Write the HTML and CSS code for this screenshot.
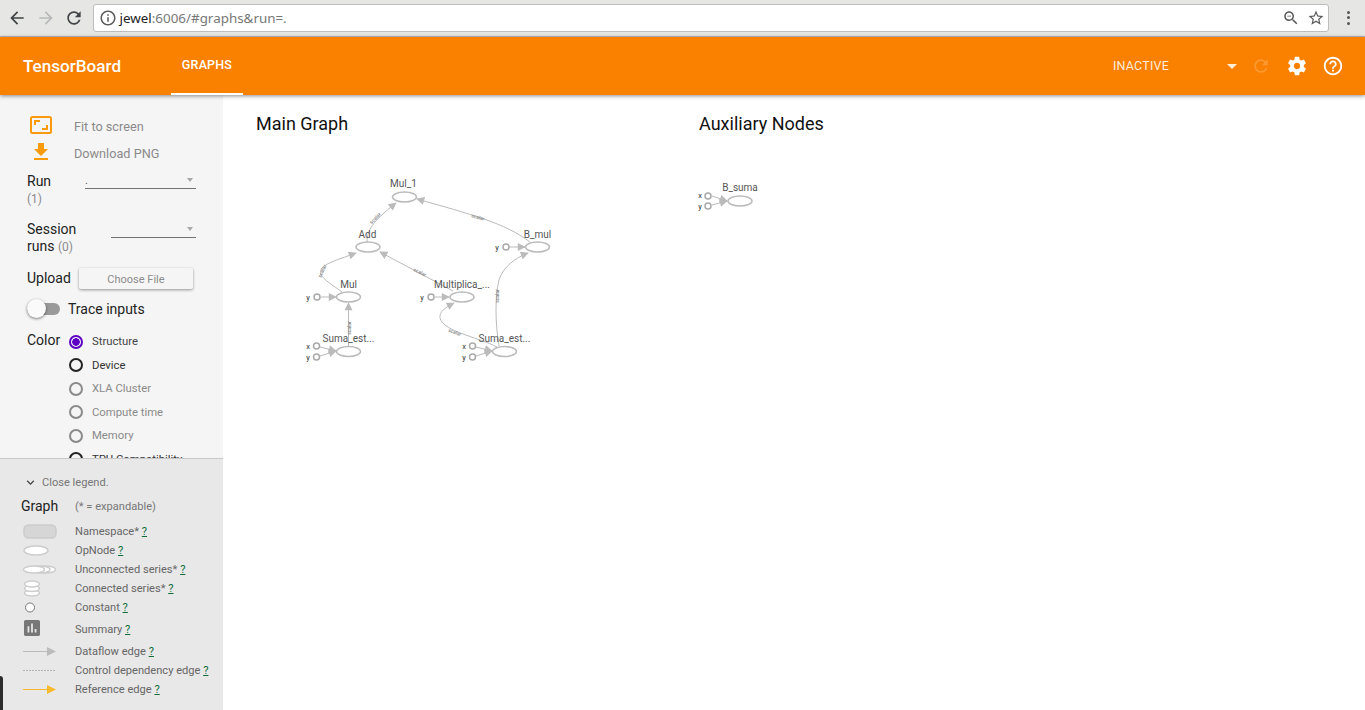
FILE: index.html
```html
<!DOCTYPE html>
<html lang="en">
<head>
  <meta charset="UTF-8">
  <title>TensorBoard</title>
  <link rel="stylesheet" href="styles.css">
</head>
<body>

  <!-- Browser toolbar -->
  <div class="browser-bar">
    <svg class="nav-icon" viewBox="0 0 24 24"><path d="M20 11H7.83l5.59-5.59L12 4l-8 8 8 8 1.41-1.41L7.83 13H20v-2z"/></svg>
    <svg class="nav-icon nav-off" viewBox="0 0 24 24"><path d="M4 11h12.17l-5.59-5.59L12 4l8 8-8 8-1.41-1.41L16.17 13H4v-2z"/></svg>
    <svg class="nav-icon" viewBox="0 0 24 24"><path d="M17.65 6.35C16.2 4.9 14.21 4 12 4c-4.42 0-7.99 3.58-7.99 8s3.57 8 7.99 8c3.73 0 6.84-2.55 7.73-6h-2.08c-.82 2.33-3.04 4-5.65 4-3.31 0-6-2.69-6-6s2.69-6 6-6c1.66 0 3.14.69 4.22 1.78L13 11h7V4l-2.35 2.35z"/></svg>
    <div class="url-box">
      <svg class="url-icon" viewBox="0 0 24 24"><path d="M11 7h2v2h-2zm0 4h2v6h-2zm1-9C6.48 2 2 6.48 2 12s4.48 10 10 10 10-4.48 10-10S17.52 2 12 2zm0 18c-4.41 0-8-3.59-8-8s3.59-8 8-8 8 3.59 8 8-3.59 8-8 8z"/></svg>
      <div class="url-text"><span class="url-host">jewel</span>:6006/#graphs&amp;run=.</div>
      <svg class="url-icon" viewBox="0 0 24 24"><path d="M15.5 14h-.79l-.28-.27C15.41 12.59 16 11.11 16 9.5 16 5.91 13.09 3 9.5 3S3 5.91 3 9.5 5.91 16 9.5 16c1.61 0 3.09-.59 4.23-1.57l.27.28v.79l5 4.99L20.49 19l-4.99-5zm-6 0C7.01 14 5 11.99 5 9.5S7.01 5 9.5 5 14 7.01 14 9.5 11.99 14 9.5 14zM7 9h5v1H7z"/></svg>
      <svg class="url-icon" viewBox="0 0 24 24"><path d="M22 9.24l-7.19-.62L12 2 9.19 8.63 2 9.24l5.46 4.73L5.82 21 12 17.27 18.18 21l-1.63-7.03L22 9.24zM12 15.4l-3.76 2.27 1-4.28-3.32-2.88 4.38-.38L12 6.1l1.71 4.04 4.38.38-3.32 2.88 1 4.28L12 15.4z"/></svg>
    </div>
    <div class="menu-dots"><span></span><span></span><span></span></div>
  </div>

  <!-- Orange header -->
  <div class="top-bar">
    <div class="brand">TensorBoard</div>
    <div class="tab">GRAPHS</div>
    <div class="top-spacer"></div>
    <div class="run-state">INACTIVE</div>
    <div class="state-caret"></div>
    <svg class="top-icon top-icon-off" viewBox="0 0 24 24"><path d="M17.65 6.35C16.2 4.9 14.21 4 12 4c-4.42 0-7.99 3.58-7.99 8s3.57 8 7.99 8c3.73 0 6.84-2.55 7.73-6h-2.08c-.82 2.33-3.04 4-5.65 4-3.31 0-6-2.69-6-6s2.69-6 6-6c1.66 0 3.14.69 4.22 1.78L13 11h7V4l-2.35 2.35z"/></svg>
    <svg class="top-icon" viewBox="0 0 24 24"><path d="M19.43 12.98c.04-.32.07-.64.07-.98s-.03-.66-.07-.98l2.11-1.65c.19-.15.24-.42.12-.64l-2-3.46c-.12-.22-.39-.3-.61-.22l-2.49 1c-.52-.4-1.08-.73-1.69-.98l-.38-2.65C14.46 2.18 14.25 2 14 2h-4c-.25 0-.46.18-.49.42l-.38 2.65c-.61.25-1.17.59-1.69.98l-2.49-1c-.23-.09-.49 0-.61.22l-2 3.46c-.13.22-.07.49.12.64l2.11 1.65c-.04.32-.07.65-.07.98s.03.66.07.98l-2.11 1.65c-.19.15-.24.42-.12.64l2 3.46c.12.22.39.3.61.22l2.49-1c.52.4 1.08.73 1.69.98l.38 2.65c.03.24.24.42.49.42h4c.25 0 .46-.18.49-.42l.38-2.65c.61-.25 1.17-.59 1.69-.98l2.49 1c.23.09.49 0 .61-.22l2-3.46c.12-.22.07-.49-.12-.64l-2.11-1.65zM12 15.5c-1.93 0-3.5-1.57-3.5-3.5s1.57-3.5 3.5-3.5 3.5 1.57 3.5 3.5-1.57 3.5-3.5 3.5z"/></svg>
    <svg class="top-icon" viewBox="0 0 24 24"><path d="M11 18h2v-2h-2v2zm1-16C6.48 2 2 6.48 2 12s4.48 10 10 10 10-4.48 10-10S17.52 2 12 2zm0 18c-4.41 0-8-3.59-8-8s3.59-8 8-8 8 3.59 8 8-3.59 8-8 8zm0-14c-2.21 0-4 1.79-4 4h2c0-1.1.9-2 2-2s2 .9 2 2c0 2-3 1.75-3 5h2c0-2.25 3-2.5 3-5 0-2.21-1.79-4-4-4z"/></svg>
  </div>

  <div class="page">

    <!-- Left side: controls and legend -->
    <div class="sidebar">
      <div class="controls">
        <div class="action-row">
          <svg class="action-icon" viewBox="0 0 22 18"><rect x="1" y="1" width="20" height="16" rx="1.5" class="fit-frame"/><path d="M5 9V5h5M17 9v4h-5" class="fit-corner"/></svg>
          <div>Fit to screen</div>
        </div>
        <div class="action-row">
          <svg class="action-icon action-icon-download" viewBox="0 0 24 24"><path d="M19 9h-4V3H9v6H5l7 7 7-7zM5 18v2h14v-2H5z"/></svg>
          <div>Download PNG</div>
        </div>

        <div class="field-row field-run">
          <div class="field-label">Run<div class="field-count">(1)</div></div>
          <div class="select-line select-run"><span class="select-value">.</span><span class="select-caret"></span></div>
        </div>
        <div class="field-row field-session">
          <div class="field-label field-label-wide">Session<br>runs <span class="field-count-inline">(0)</span></div>
          <div class="select-line select-session"><span class="select-value"></span><span class="select-caret"></span></div>
        </div>

        <div class="upload-row">
          <div class="upload-label">Upload</div>
          <div class="upload-btn">Choose File</div>
        </div>

        <div class="toggle-row">
          <div class="toggle"><div class="toggle-thumb"></div></div>
          <div>Trace inputs</div>
        </div>

        <div class="color-row">
          <div class="color-label">Color</div>
          <div class="radio-list">
            <div class="radio-item radio-on"><span class="radio"></span>Structure</div>
            <div class="radio-item radio-dark"><span class="radio"></span>Device</div>
            <div class="radio-item"><span class="radio"></span>XLA Cluster</div>
            <div class="radio-item"><span class="radio"></span>Compute time</div>
            <div class="radio-item"><span class="radio"></span>Memory</div>
            <div class="radio-item radio-dark"><span class="radio"></span>TPU Compatibility</div>
          </div>
        </div>
      </div>

      <div class="legend">
        <div class="legend-toggle">
          <svg viewBox="0 0 24 24"><path d="M16.59 8.59L12 13.17 7.41 8.59 6 10l6 6 6-6z"/></svg>
          <span>Close legend.</span>
        </div>
        <div class="legend-head"><div class="legend-title">Graph</div><div>(* = expandable)</div></div>

        <div class="legend-row">
          <svg class="legend-icon" viewBox="0 0 34 19"><rect x="1" y="3" width="32" height="13" rx="4.5" class="legend-ns"/></svg>
          <div>Namespace* <a class="help">?</a></div>
        </div>
        <div class="legend-row">
          <svg class="legend-icon" viewBox="0 0 34 19"><ellipse cx="13" cy="9.5" rx="12" ry="4.5" class="legend-op"/></svg>
          <div>OpNode <a class="help">?</a></div>
        </div>
        <div class="legend-row">
          <svg class="legend-icon" viewBox="0 0 34 19">
            <ellipse cx="22.500" cy="9.5" rx="10" ry="3.500" class="legend-op"/>
            <ellipse cx="17" cy="9.5" rx="10" ry="3.500" class="legend-op"/>
            <ellipse cx="11" cy="9.5" rx="10.500" ry="3.500" class="legend-op"/>
          </svg>
          <div>Unconnected series* <a class="help">?</a></div>
        </div>
        <div class="legend-row">
          <svg class="legend-icon" viewBox="0 0 34 19">
            <ellipse cx="9" cy="14" rx="7.500" ry="3" class="legend-op"/>
            <ellipse cx="9" cy="9.5" rx="7.500" ry="3" class="legend-op"/>
            <ellipse cx="9" cy="5" rx="7.500" ry="3" class="legend-op"/>
          </svg>
          <div>Connected series* <a class="help">?</a></div>
        </div>
        <div class="legend-row">
          <svg class="legend-icon" viewBox="0 0 34 19"><circle cx="7" cy="9.500" r="4.500" fill="#fff" stroke="#777"/></svg>
          <div>Constant <a class="help">?</a></div>
        </div>
        <div class="legend-row legend-row-tall">
          <svg class="legend-icon-summary" viewBox="3 3 18 18"><path d="M19 3H5c-1.100 0-2 .9-2 2v14c0 1.100.9 2 2 2h14c1.100 0 2-.9 2-2V5c0-1.100-.9-2-2-2zM9 17H7v-7h2v7zm4 0h-2V7h2v10zm4 0h-2v-4h2v4z"/></svg>
          <div>Summary <a class="help">?</a></div>
        </div>
        <div class="legend-row">
          <svg class="legend-icon" viewBox="0 0 34 19"><path d="M0 9.500H25" stroke="#bbb" stroke-width="1"/><path d="M24 5l9 4.500-9 4.500z" fill="#bbb"/></svg>
          <div>Dataflow edge <a class="help">?</a></div>
        </div>
        <div class="legend-row">
          <svg class="legend-icon" viewBox="0 0 34 19"><path d="M0 9.500H33" stroke="#b4b4b4" stroke-width="1" stroke-dasharray="2 1"/></svg>
          <div>Control dependency edge <a class="help">?</a></div>
        </div>
        <div class="legend-row">
          <svg class="legend-icon" viewBox="0 0 34 19"><path d="M0 9.500H25" stroke="#fbb92e" stroke-width="1"/><path d="M24 5l9 4.500-9 4.500z" fill="#fbb92e"/></svg>
          <div>Reference edge <a class="help">?</a></div>
        </div>
      </div>
      <div class="dock-corner"></div>
    </div>

    <!-- Graph canvas, drawn in page coordinates -->
    <div class="board">
      <svg class="graph" viewBox="223 95 1142 615">
        <defs>
          <marker id="arrow" viewBox="0 0 10 10" refX="9" refY="5" markerWidth="9" markerHeight="8" markerUnits="userSpaceOnUse" orient="auto"><path d="M0 0L10 5L0 10z" fill="#bbb"/></marker>
        </defs>

        <g class="edges">
          <path marker-end="url(#arrow)" d="M367 242C367 228 376 219 396 203"/>
          <path marker-end="url(#arrow)" d="M342 292C330 283 316 276 322 268C328 262 340 259 356 253"/>
          <path marker-end="url(#arrow)" d="M453 291L380 252"/>
          <path marker-end="url(#arrow)" d="M530 242C505 223 470 214 417 199"/>
          <path marker-end="url(#arrow)" d="M499 346C495 322 495 296 499 280C503 267 515 258 528 253"/>
          <path marker-end="url(#arrow)" d="M497 347C477 337 451 333 442 322C436 314 444 308 454 303"/>
          <path marker-end="url(#arrow)" d="M348.500 346V303"/>
          <path marker-end="url(#arrow)" d="M321 297H336"/>
          <path marker-end="url(#arrow)" d="M320 347L336 351"/>
          <path marker-end="url(#arrow)" d="M320 356L336 351"/>
          <path marker-end="url(#arrow)" d="M435 297H449"/>
          <path marker-end="url(#arrow)" d="M476 347L492 351"/>
          <path marker-end="url(#arrow)" d="M476 356L492 351"/>
          <path marker-end="url(#arrow)" d="M509 247H525"/>
          <path marker-end="url(#arrow)" d="M712 196L727 201"/>
          <path marker-end="url(#arrow)" d="M712 205L727 201"/>
        </g>

        <g class="edge-labels">
          <text transform="translate(375 218) rotate(-45)">scalar</text>
          <text transform="translate(322 271) rotate(-65)">scalar</text>
          <text transform="translate(420 272) rotate(27)">scalar</text>
          <text transform="translate(478 217) rotate(16)">scalar</text>
          <text transform="translate(348.500 328) rotate(-90)">scalar</text>
          <text transform="translate(497 296) rotate(-90)">scalar</text>
          <text transform="translate(455 332) rotate(20)">scalar</text>
        </g>

        <g class="nodes">
          <ellipse cx="404.500" cy="197" rx="12" ry="5"/>
          <ellipse cx="368" cy="247" rx="12" ry="5"/>
          <ellipse cx="348.500" cy="297" rx="12" ry="5"/>
          <ellipse cx="348.500" cy="351.500" rx="12" ry="5"/>
          <ellipse cx="462" cy="297" rx="12" ry="5"/>
          <ellipse cx="504.500" cy="351.500" rx="12" ry="5"/>
          <ellipse cx="537.500" cy="247" rx="12" ry="5"/>
          <ellipse cx="740" cy="201" rx="12" ry="5"/>
          <circle cx="317" cy="297" r="3"/>
          <circle cx="316.500" cy="346" r="3"/>
          <circle cx="316.500" cy="357" r="3"/>
          <circle cx="431" cy="297" r="3"/>
          <circle cx="472.500" cy="346" r="3"/>
          <circle cx="472.500" cy="357" r="3"/>
          <circle cx="506" cy="247" r="3"/>
          <circle cx="708" cy="196" r="3"/>
          <circle cx="708" cy="206" r="3"/>
        </g>

        <g class="node-labels">
          <text x="403.500" y="187">Mul_1</text>
          <text x="367.500" y="238">Add</text>
          <text x="348.500" y="288">Mul</text>
          <text x="348.500" y="342">Suma_est...</text>
          <text x="462" y="288">Multiplica_...</text>
          <text x="504.500" y="342">Suma_est...</text>
          <text x="537.500" y="238">B_mul</text>
          <text x="740" y="191">B_suma</text>
        </g>

        <g class="port-labels">
          <text x="308" y="300">y</text>
          <text x="308" y="349">x</text>
          <text x="308" y="360">y</text>
          <text x="422" y="300">y</text>
          <text x="464" y="349">x</text>
          <text x="464" y="360">y</text>
          <text x="497" y="250">y</text>
          <text x="700" y="198">x</text>
          <text x="700" y="209">y</text>
        </g>
      </svg>
      <div class="board-titles">
        <div class="board-title board-title-main">Main Graph</div>
        <div class="board-title">Auxiliary Nodes</div>
      </div>
    </div>
  </div>

</body>
</html>
```

FILE: styles.css
```css
* {
  box-sizing: border-box;
}

html, body {
  height: 100%;
}

body {
  margin: 0;
  font-family: Roboto, "Liberation Sans", sans-serif;
  background-color: white;
  overflow: hidden;
  display: flex;
  flex-direction: column;
}

/* Browser toolbar */
.browser-bar {
  height: 37px;
  flex: none;
  background-color: #e6e6e5;
  border-bottom: 1px solid #b8b8b8;
  display: flex;
  align-items: center;
  padding: 0 0 1px 7px;
}

.nav-icon {
  width: 20px;
  height: 20px;
  margin-right: 8.500px;
  fill: #404345;
}

.nav-off {
  fill: #b8b9ba;
}

.url-box {
  width: 1236.500px;
  height: 28px;
  background-color: white;
  border: 1px solid #bdbdbd;
  border-radius: 3px;
  display: flex;
  align-items: center;
  padding: 0 3.500px 0 5px;
  gap: 3px;
}

.url-icon {
  width: 18px;
  height: 18px;
  fill: #5a5a5a;
}

.url-box .url-icon:last-child {
  margin-left: 4px;
}

.url-text {
  flex: 1;
  font-family: "Noto Sans", sans-serif;
  font-size: 13.400px;
  color: #777;
}

.url-host {
  color: #222;
}

.menu-dots {
  margin-left: 17.500px;
  display: flex;
  flex-direction: column;
  gap: 2.500px;
}

.menu-dots span {
  width: 3px;
  height: 3px;
  border-radius: 50%;
  background-color: #555;
}

/* Orange header */
.top-bar {
  height: 58px;
  flex: none;
  background-color: #fa8000;
  color: white;
  display: flex;
  align-items: center;
  padding-left: 23px;
  box-shadow: 0 1px 4px rgba(0, 0, 0, 0.45);
  position: relative;
  z-index: 2;
}

.brand {
  font-size: 17.100px;
  font-weight: 500;
  width: 148px;
}

.tab {
  width: 72px;
  height: 58px;
  line-height: 56px;
  text-align: center;
  font-size: 12.500px;
  font-weight: 500;
  letter-spacing: 0.2px;
  border-bottom: 2px solid white;
}

.top-spacer {
  flex: 1;
}

.run-state {
  font-size: 12.500px;
  letter-spacing: 0.2px;
  opacity: 0.85;
  width: 114px;
  padding-bottom: 2px;
}

.state-caret {
  width: 0;
  height: 0;
  border-left: 5px solid transparent;
  border-right: 5px solid transparent;
  border-top: 5px solid white;
  opacity: 0.85;
  margin-right: 14px;
}

.top-icon {
  width: 22px;
  height: 22px;
  fill: white;
  margin-right: 14px;
}

.top-icon:last-child {
  margin-right: 21px;
}

.top-icon-off {
  width: 20px;
  height: 20px;
  margin-right: 15px;
  opacity: 0.2;
}

.page {
  flex: 1;
  min-height: 0;
  display: flex;
}

/* Left side */
.sidebar {
  width: 223px;
  flex: none;
  background-color: #f5f5f5;
  display: flex;
  flex-direction: column;
  position: relative;
}

.controls {
  height: 363px;
  flex: none;
  overflow: hidden;
  padding: 18px 27px 0;
  font-size: 14px;
  color: #222;
}

.action-row {
  height: 27px;
  display: flex;
  align-items: center;
  font-size: 12.700px;
  color: #8a8a8a;
}

.action-icon {
  width: 22px;
  height: 22px;
  margin: 0 22px 3px 3px;
  fill: #fb9a0a;
}

.action-icon-download {
  width: 24px;
  height: 24px;
  margin: 0 21px 4px 2px;
}

.fit-frame {
  fill: none;
  stroke: #fb9a0a;
  stroke-width: 2;
}

.fit-corner {
  fill: none;
  stroke: #fb9a0a;
  stroke-width: 2;
}

.field-row {
  display: flex;
  justify-content: space-between;
  align-items: flex-start;
}

.field-run {
  margin-top: 5px;
  height: 37px;
}

.field-session {
  margin-top: 12px;
  height: 35px;
}

.field-label {
  line-height: 18px;
}

.field-label-wide {
  line-height: 17px;
}

.field-count {
  font-size: 12px;
  color: #8a8a8a;
}

.field-count-inline {
  font-size: 12px;
  color: #8a8a8a;
}

.select-line {
  height: 17px;
  border-bottom: 1px solid #737373;
  display: flex;
  justify-content: space-between;
  align-items: center;
  font-size: 11px;
  color: #555;
  padding-right: 3px;
}

.select-run {
  width: 111px;
}

.select-session {
  width: 85px;
}

.select-caret {
  width: 0;
  height: 0;
  border-left: 3.500px solid transparent;
  border-right: 3.500px solid transparent;
  border-top: 4px solid #a8a8a8;
}

.upload-row {
  margin-top: 11px;
  display: flex;
  align-items: center;
  height: 22px;
}

.upload-label {
  width: 52px;
}

.upload-btn {
  width: 114px;
  height: 21px;
  line-height: 23px;
  text-align: center;
  font-size: 11px;
  color: #8c8c8c;
  background-color: #f5f5f5;
  border-radius: 2px;
  box-shadow: 0 1px 3px rgba(0, 0, 0, 0.4);
}

.toggle-row {
  margin-top: 10px;
  height: 20px;
  display: flex;
  align-items: center;
  gap: 8px;
}

.toggle {
  width: 33px;
  height: 12px;
  background-color: #9a9a9a;
  border-radius: 6px;
  position: relative;
}

.toggle-thumb {
  position: absolute;
  left: 0;
  top: -4px;
  width: 19px;
  height: 19px;
  border-radius: 50%;
  background-color: #fafafa;
  box-shadow: 0 1px 3px rgba(0, 0, 0, 0.5);
}

.color-row {
  margin-top: 12px;
  display: flex;
}

.color-label {
  width: 42px;
  line-height: 18px;
}

.radio-list {
  display: flex;
  flex-direction: column;
  margin-top: -1px;
}

.radio-item {
  height: 23.500px;
  display: flex;
  align-items: center;
  gap: 9px;
  font-size: 11.300px;
  color: #8a8a8a;
  white-space: nowrap;
}

.radio {
  width: 14px;
  height: 14px;
  border-radius: 50%;
  border: 2px solid #8a8a8a;
  flex: none;
}

.radio-dark {
  color: #333;
}

.radio-dark .radio {
  border-color: #222;
}

.radio-on {
  color: #444;
}

.radio-on .radio {
  border-color: #5c00c4;
  background: radial-gradient(circle, #5c00c4 0 3.500px, transparent 4px);
}

/* Legend */
.legend {
  flex: 1;
  background-color: #e8e8e8;
  border-top: 1px solid #c8c8c8;
  padding: 15px 0 0 23px;
  font-size: 11.100px;
  color: #666;
}

.legend-toggle {
  height: 16px;
  display: flex;
  align-items: center;
  gap: 4px;
  color: #777;
}

.legend-toggle svg {
  width: 15px;
  height: 15px;
  fill: #444;
}

.legend-head {
  margin-top: 7px;
  height: 18px;
  display: flex;
  align-items: center;
  color: #777;
}

.legend-title {
  width: 54px;
  margin-left: -2px;
  font-size: 14px;
  color: #222;
}

.legend-row {
  height: 19px;
  display: flex;
  align-items: center;
}

.legend-head + .legend-row {
  margin-top: 7px;
}

.legend-row-tall {
  height: 25px;
}

.legend-icon {
  width: 34px;
  height: 19px;
  margin-right: 18px;
  flex: none;
}

.legend-icon-summary {
  width: 16px;
  height: 16px;
  margin: 0 35px 3px 1px;
  fill: #777;
  flex: none;
}

.legend-ns {
  fill: #d6d6d6;
  stroke: #cbcbcb;
  stroke-width: 1.500;
}

.legend-op {
  fill: white;
  stroke: #cdcdcd;
  stroke-width: 1.500;
}

.help {
  color: #0d6b38;
  text-decoration: underline;
}

.dock-corner {
  position: absolute;
  left: 0;
  bottom: 0;
  width: 3px;
  height: 34px;
  background-color: #2b2b2b;
  border-top-right-radius: 3px;
}

/* Graph canvas */
.board {
  flex: 1;
  position: relative;
}

.graph {
  position: absolute;
  left: 0;
  top: 0;
  width: 100%;
  height: 100%;
}

.board-titles {
  position: relative;
  display: flex;
  padding: 18px 0 0 33px;
  font-size: 18px;
  color: #111;
}

.board-title-main {
  width: 443px;
}

.edges path {
  fill: none;
  stroke: #bbb;
  stroke-width: 1;
}

.edge-labels text {
  font-size: 5px;
  font-weight: 500;
  fill: #888;
  text-anchor: middle;
  dominant-baseline: central;
}

.nodes ellipse {
  fill: white;
  stroke: #bbb;
  stroke-width: 1.500;
}

.nodes circle {
  fill: white;
  stroke: #aaa;
  stroke-width: 1.500;
}

.node-labels text {
  font-size: 10px;
  fill: #555;
  text-anchor: middle;
}

.port-labels text {
  font-size: 7.500px;
  fill: #333;
  text-anchor: middle;
}
```
